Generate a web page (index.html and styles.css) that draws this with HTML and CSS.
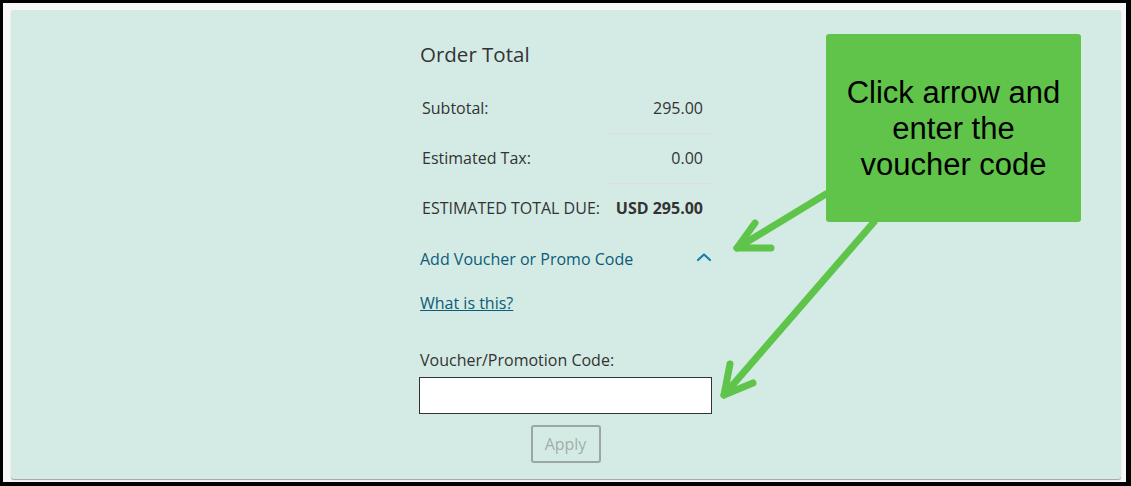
FILE: index.html
```html
<!DOCTYPE html>
<html>
<head>
<meta charset="utf-8">
<link rel="stylesheet" href="styles.css">
</head>
<body>
<div class="frame">
  <div class="panel">
    <div class="summary">
      <h2 class="title">Order Total</h2>
      <div class="totals">
        <div class="label">Subtotal:</div>
        <div class="value lined">295.00</div>
        <div class="label">Estimated Tax:</div>
        <div class="value lined">0.00</div>
        <div class="label caps">ESTIMATED TOTAL DUE:</div>
        <div class="value strong">USD 295.00</div>
      </div>
      <div class="voucher-toggle">
        <span>Add Voucher or Promo Code</span>
        <svg class="chevron" width="16" height="10" viewBox="0 0 16 10"><path d="M2 8 L8 2.5 L14 8" fill="none" stroke="#1383a3" stroke-width="2.2" stroke-linecap="round" stroke-linejoin="round"/></svg>
      </div>
      <a class="what" href="#">What is this?</a>
      <label class="field-label" for="code">Voucher/Promotion Code:</label>
      <input id="code" class="code-input" type="text">
      <div class="apply-row"><button class="apply" disabled>Apply</button></div>
    </div>
  </div>
</div>
<div class="callout">Click arrow and<br>enter the<br>voucher code</div>
<svg class="arrows" width="1131" height="486" viewBox="0 0 1131 486">
  <g fill="none" stroke="#5fc44a" stroke-width="7" stroke-linecap="round" stroke-linejoin="round">
    <path d="M826 194 L737 248"/>
    <path d="M755 223 L737 248 L771 248"/>
    <path d="M874 222 L724 395"/>
    <path d="M730 364 L724 395 L753 383"/>
  </g>
</svg>
</body>
</html>
```
FILE: styles.css
```css
html, body {
  margin: 0;
  padding: 0;
}
body {
  background: #000;
  width: 1131px;
  height: 486px;
  overflow: hidden;
  position: relative;
  font-family: "Open Sans", "Noto Sans", sans-serif;
  color: #333;
}
.frame {
  margin: 3px 5px 4px 3px;
  height: 479px;
  box-sizing: border-box;
  padding: 7px 5px 3px 8px;
  background: #f7f7f7;
}
.panel {
  height: 469px;
  box-sizing: border-box;
  background: #d4ebe5;
  border-radius: 3px;
  box-shadow: 0 1px 1px rgba(0,0,0,0.35);
  padding-top: 30px;
}
.summary {
  width: 292px;
  margin: 0 auto;
  display: flex;
  flex-direction: column;
}
.title {
  margin: 0;
  font-size: 20.5px;
  font-weight: 400;
  line-height: 28px;
  color: #333;
}
.totals {
  margin-top: 16px;
  display: grid;
  grid-template-columns: 187px 105px;
  font-size: 16px;
}
.label, .value {
  height: 49px;
  line-height: 49px;
  white-space: nowrap;
}
.label {
  padding-left: 2px;
}
.value {
  text-align: right;
  padding-right: 9px;
}
.lined {
  border-bottom: 1px solid #e2dcdc;
}
.strong {
  font-weight: 700;
}
.voucher-toggle {
  margin-top: 15px;
  display: flex;
  justify-content: space-between;
  align-items: center;
  height: 22px;
  font-size: 16px;
  color: #0b5b78;
}
.chevron {
  margin-top: -4px;
}
.what {
  margin-top: 22px;
  align-self: flex-start;
  font-size: 16px;
  line-height: 22px;
  color: #0b5b78;
  text-decoration: underline;
}
.field-label {
  margin-top: 35px;
  font-size: 16px;
  line-height: 22px;
  color: #333;
}
.code-input {
  margin: 6px 0 0 -1px;
  width: 293px;
  height: 37px;
  box-sizing: border-box;
  border: 1px solid #333;
  background: #fff;
  padding: 0 6px;
  font-family: inherit;
}
.apply-row {
  display: flex;
  justify-content: center;
  margin-top: 11px;
}
.apply {
  width: 70px;
  height: 38px;
  box-sizing: border-box;
  border: 2px solid #9aa7a3;
  border-radius: 3px;
  background: transparent;
  color: #a2aeaa;
  font-family: "Open Sans", "Noto Sans", sans-serif;
  font-size: 16px;
  padding: 0;
  margin-left: -1px;
}
.callout {
  position: absolute;
  left: 826px;
  top: 34px;
  width: 255px;
  height: 188px;
  box-sizing: border-box;
  padding-top: 41px;
  background: #60c44a;
  border-radius: 3px;
  font-family: "Liberation Sans", Arial, sans-serif;
  font-size: 31px;
  line-height: 36px;
  text-align: center;
  color: #000;
}
.arrows {
  position: absolute;
  left: 0;
  top: 0;
  pointer-events: none;
}
```
